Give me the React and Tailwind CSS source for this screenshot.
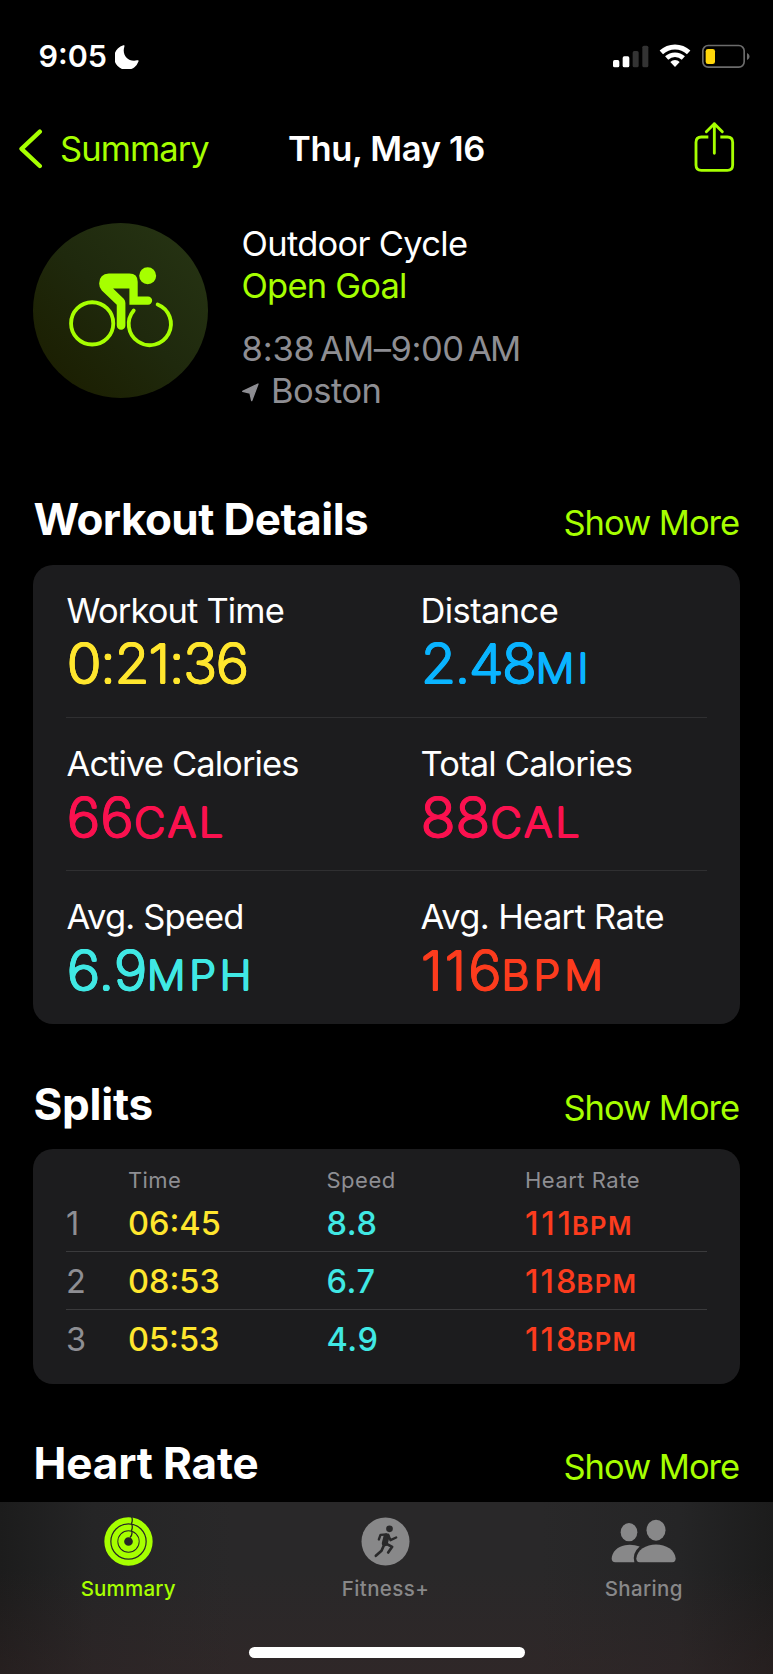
import React from 'react';

// Spreads a light weight evenly in all directions, which rounds the stroke ends.
const rounded =
  '[text-shadow:1.15px_0,-1.15px_0,0_1.15px,0_-1.15px,0.85px_0.85px,-0.85px_0.85px,0.85px_-0.85px,-0.85px_-0.85px]';

const metrics = [
  [
    { label: 'Workout Time', lt: 'tracking-[-0.85px]', value: '0:21:36', vt: 'tracking-[-1.1px]', color: 'text-[#ffe62e]' },
    { label: 'Distance', lt: 'tracking-[-0.6px]', value: '2.48', vt: 'tracking-[-1.3px]', unit: 'MI', ut: 'tracking-[3px] ml-[0.5px]', color: 'text-[#0ab4ff]' },
  ],
  [
    { label: 'Active Calories', lt: 'tracking-[-0.9px]', value: '66', vt: 'tracking-[0.5px]', unit: 'CAL', ut: 'tracking-[2.8px]', color: 'text-[#fa114f]' },
    { label: 'Total Calories', lt: 'tracking-[-0.81px]', value: '88', vt: 'tracking-[0.5px]', unit: 'CAL', ut: 'tracking-[2.8px]', color: 'text-[#fa114f]' },
  ],
  [
    { label: 'Avg. Speed', lt: 'tracking-[-0.87px]', value: '6.9', vt: 'tracking-[0.3px]', unit: 'MPH', ut: 'tracking-[3.6px] -ml-[0.5px]', color: 'text-[#40e8e4]' },
    { label: 'Avg. Heart Rate', lt: 'tracking-[-0.67px]', value: '116', vt: 'tracking-[2px]', unit: 'BPM', ut: 'tracking-[4px] -ml-[2px]', color: 'text-[#fc3c1e]' },
  ],
];

const splits = [
  { n: 1, time: '06:45', speed: '8.8', hr: '111', ht: 'tracking-[2.8px]' },
  { n: 2, time: '08:53', speed: '6.7', hr: '118', ht: 'tracking-[2px]' },
  { n: 3, time: '05:53', speed: '4.9', hr: '118', ht: 'tracking-[2px]' },
];

function StatusBar() {
  return (
    <div className="flex h-[113px] shrink-0 items-center justify-between pl-[38.5px] pr-[23px] text-white">
      <div className="flex items-center">
        <span className="text-[30.5px] font-semibold leading-none">9:05</span>
        <svg className="ml-[8px] h-[24px] w-[24px]" viewBox="343 72 72 72" fill="currentColor">
          <path d="M368 73 Q373 71 371 77 C363 102 382 124 409 118 Q416 116 413 122 A37.5 37.5 0 1 1 368 73 Z" />
        </svg>
      </div>
      <svg className="mb-px h-[24px] w-[137px]" viewBox="679 72 411 72" fill="none">
        <rect x="679" y="120" width="19" height="22" rx="5" fill="#fff" />
        <rect x="708" y="109" width="20" height="33" rx="5" fill="#fff" />
        <rect x="738" y="93" width="18" height="49" rx="5" fill="#333" />
        <rect x="767" y="77" width="18" height="65" rx="5" fill="#333" />
        <path d="M824 97 A60 60 0 0 1 906 97" stroke="#fff" strokeWidth="15" />
        <path d="M840 114 A37 37 0 0 1 890 114" stroke="#fff" strokeWidth="14" />
        <path d="M851 126 A20 20 0 0 1 879 126 L865 141 Z" fill="#fff" />
        <rect x="948.5" y="76.5" width="124" height="65" rx="16" stroke="#6b6b6b" strokeWidth="5" />
        <path d="M1081 99 C1091 103 1091 116 1081 120 Z" fill="#6b6b6b" />
        <rect x="957" y="87" width="28" height="45" rx="7" fill="#ffd60a" />
      </svg>
    </div>
  );
}

function NavBar() {
  return (
    <div className="grid h-[71px] shrink-0 grid-cols-[1fr_auto_1fr] items-center px-[19px]">
      <div className="flex items-center text-[#a6ff00]">
        <svg className="h-[40px] w-[24px]" viewBox="57 325 72 120" fill="none" stroke="currentColor" strokeWidth="13" strokeLinecap="round" strokeLinejoin="round">
          <path d="M119.5 333 L64.5 384.5 L119.5 436" />
        </svg>
        <span className="ml-[17px] text-[34.5px] leading-[42px] tracking-[-0.92px]">Summary</span>
      </div>
      <span className="text-[34.5px] font-semibold leading-[42px] tracking-[-0.33px] text-white">Thu, May 16</span>
      <svg className="mb-[3px] mr-[19px] h-[52px] w-[41px] justify-self-end" viewBox="922 304 123 156" fill="none" stroke="#a6ff00" strokeWidth="8.5" strokeLinecap="round" strokeLinejoin="round">
        <path d="M965 352 H944 Q928 352 928 368 V436 Q928 452 944 452 H1022 Q1038 452 1038 436 V368 Q1038 352 1022 352 H1001" strokeLinecap="butt" />
        <path d="M983 312 V401 M959 336 L983 312 L1007 336" />
      </svg>
    </div>
  );
}

function CycleBadge() {
  return (
    <div className="flex h-[175.5px] w-[175.5px] shrink-0 items-center justify-center rounded-full bg-linear-to-tr from-[#1a1c00] via-[#1f290d] to-[#273514]">
      <svg className="h-[175.5px] w-[175.5px]" viewBox="38 37 528 528" fill="none">
        <circle cx="383" cy="196" r="25.5" fill="#a6ff00" />
        <path
          d="M266 189 H328 Q353 189 353 214 V258 H384 A12.5 12.5 0 0 1 384 283 H328 V234 H279 L311 265 Q316 270 316 278 V345 A13 13 0 0 1 290 345 V283 L245 240 Q237 232 237 219 Q238 190 266 189 Z"
          fill="#a6ff00"
        />
        <g stroke="#a6ff00" strokeWidth="11.5" strokeLinecap="round">
          <circle cx="216" cy="339" r="63.5" />
          <path d="M413 282 A63.5 63.5 0 1 1 341 300" />
        </g>
      </svg>
    </div>
  );
}

function Hero() {
  return (
    <div className="mt-[38.5px] flex h-[189px] shrink-0 items-start pl-[32.5px] text-[34.5px] leading-[42px]">
      <CycleBadge />
      <div className="ml-[33.5px] flex flex-col">
        <span className="tracking-[-0.7px] text-white">Outdoor Cycle</span>
        <span className="tracking-[-0.78px] text-[#a6ff00]">Open Goal</span>
        <span className="mt-[21.5px] flex text-[#8e8e93]">
          <span className="tracking-[-0.2px]">8:38</span>
          <span className="ml-[5px] tracking-[-0.45px]">AM–9:00</span>
          <span className="ml-[4.5px] tracking-[-2px]">AM</span>
        </span>
        <span className="flex items-center text-[#8e8e93]">
          <svg className="mt-[2px] h-[19px] w-[17px]" viewBox="38 518 51 57" fill="currentColor" stroke="currentColor" strokeWidth="4" strokeLinejoin="round">
            <path d="M40 543 L86 521 L67 571 L62 548 Z" />
          </svg>
          <span className="ml-[12.5px] tracking-[-0.5px]">Boston</span>
        </span>
      </div>
    </div>
  );
}

function SectionHeader({ title, className }) {
  return (
    <div className="flex h-[52px] shrink-0 items-baseline justify-between pl-[33.5px] pr-[34px]">
      <h2 className={'text-[44px] font-bold leading-[52px] text-white ' + className}>{title}</h2>
      <span className="text-[34.5px] leading-[42px] tracking-[-1.05px] text-[#a6ff00]">Show More</span>
    </div>
  );
}

function WorkoutDetails() {
  return (
    <div className="mx-[33px] mt-[20px] shrink-0 rounded-[20px] bg-[#1c1c1e] px-[33px]">
      {metrics.map((row, i) => (
        <div key={i} className="grid h-[153.2px] grid-cols-[354px_1fr] border-b border-[#2f2f31] pt-[25px] last:border-b-0">
          {row.map((m) => (
            <div key={m.label} className="flex flex-col whitespace-nowrap pl-[0.5px]">
              <span className={'text-[34.5px] leading-[42px] text-white ' + m.lt}>{m.label}</span>
              <span className={'mt-[6.5px] flex origin-left scale-x-[1.05] items-baseline text-[54px] font-extralight leading-[52px] ' + rounded + ' ' + m.color}>
                <span className={m.vt}>{m.value}</span>
                {m.unit && <span className={'text-[41px] ' + m.ut}>{m.unit}</span>}
              </span>
            </div>
          ))}
        </div>
      ))}
    </div>
  );
}

function Splits() {
  const cols = 'grid grid-cols-[62px_198.5px_198.5px_1fr] ';
  return (
    <div className="mx-[33px] mt-[19.6px] h-[235px] shrink-0 rounded-[20px] bg-[#1c1c1e] px-[33px] pt-[16.5px]">
      <div className={cols + 'h-[28.5px] text-[22px] leading-[28px] text-[#8e8e93]'}>
        <span />
        <span className="tracking-[0.4px]">Time</span>
        <span className="tracking-[0.5px]">Speed</span>
        <span className="tracking-[0.5px]">Heart Rate</span>
      </div>
      {splits.map((s) => (
        <div key={s.n} className={cols + 'h-[57.8px] items-center border-b border-[#3a3a3c] pt-[3px] text-[32.5px] font-medium leading-[40px] last:border-b-0'}>
          <span className="font-normal text-[#8e8e93]">{s.n}</span>
          <span className="text-[#ffe62e]">{s.time}</span>
          <span className="tracking-[0.6px] text-[#40e8e4]">{s.speed}</span>
          <span className="whitespace-nowrap pt-px text-[#fc3c1e]">
            <span className={s.ht}>{s.hr}</span>
            <span className="-ml-[2px] text-[25.5px] font-semibold tracking-[1.4px]">BPM</span>
          </span>
        </div>
      ))}
    </div>
  );
}

function RingsIcon() {
  return (
    <svg className="h-[49px] w-[49px]" viewBox="-24.5 -24.5 49 49" fill="none">
      <g stroke="#a6ff00">
        <circle r="21.2" strokeWidth="5.9" />
        <circle r="14.1" strokeWidth="5.9" />
        <circle r="7.3" strokeWidth="5.9" />
      </g>
      <path d="M3 -25 Q4.6 -21.5 3 -18 Q4.6 -14.5 3 -11 Q4.6 -7.5 1.5 -4" stroke="#26291f" strokeWidth="1.3" />
    </svg>
  );
}

function RunIcon() {
  return (
    <svg className="h-[49px] w-[49px]" viewBox="-73.5 -73.5 147 147" fill="none">
      <circle r="72" fill="#888889" />
      <circle cx="12" cy="-38" r="10" fill="#29292a" />
      <g stroke="#29292a" strokeLinecap="round" strokeLinejoin="round">
        <path d="M3 -15 L-2 5" strokeWidth="18" />
        <path d="M2 -21 L-15 -20 L-20 -6 M8 -20 L15 -4 L32 -12" strokeWidth="7" />
        <path d="M1 6 L20 16 L8 33 M-5 12 L-12 28 L-29 43" strokeWidth="8" />
      </g>
    </svg>
  );
}

function SharingIcon() {
  return (
    <svg className="h-[49px] w-[66px]" viewBox="671 261.5 198 147" fill="#888889">
      <ellipse cx="725" cy="307" rx="25" ry="27.5" />
      <ellipse cx="806" cy="301" rx="28.5" ry="31.5" />
      <path d="M757 350 Q737 343 713 346 C690 350 674 366 673 386 Q673 397 684 397 H741 Q734 370 757 350 Z" />
      <path d="M757 397 Q747 397 747 386 C749 360 776 344 806 344 C836 344 863 360 865 386 Q865 397 855 397 Z" />
    </svg>
  );
}

function TabBar() {
  const base = 'flex flex-1 flex-col items-center text-[20.5px] font-medium leading-[26px] ';
  return (
    <div className="h-[172px] shrink-0 bg-[linear-gradient(to_right,#1c1c1c,#252526_12%,#292829_30%,#292829_70%,#252526_88%,#1c1c1c)]">
      <div className="flex h-full flex-col items-center bg-linear-to-b from-transparent from-40% to-[#3a2626]/35">
        <div className="flex h-[145px] w-full pt-[15px]">
          <div className={base + 'pr-px tracking-[0.19px] text-[#a6ff00]'}>
            <RingsIcon />
            <span className="mt-[10px]">Summary</span>
          </div>
          <div className={base + 'pr-[2px] tracking-[0.4px] text-[#888889]'}>
            <RunIcon />
            <span className="mt-[10px]">Fitness+</span>
          </div>
          <div className={base + 'pr-px tracking-[0.35px] text-[#888889]'}>
            <SharingIcon />
            <span className="mt-[10px]">Sharing</span>
          </div>
        </div>
        <div className="h-[11px] w-[276px] rounded-full bg-white" />
      </div>
    </div>
  );
}

export default function App() {
  return (
    <div className="flex h-[1674px] w-[773px] flex-col overflow-hidden bg-black font-['Inter',sans-serif]">
      <StatusBar />
      <NavBar />
      <Hero />
      <div className="h-[81.4px] shrink-0" />
      <SectionHeader title="Workout Details" className="tracking-[-0.55px]" />
      <WorkoutDetails />
      <div className="h-[53.4px] shrink-0" />
      <SectionHeader title="Splits" className="tracking-[-0.25px]" />
      <Splits />
      <div className="h-[52.8px] shrink-0" />
      <SectionHeader title="Heart Rate" className="tracking-[-0.14px]" />
      <div className="flex-1" />
      <TabBar />
    </div>
  );
}
